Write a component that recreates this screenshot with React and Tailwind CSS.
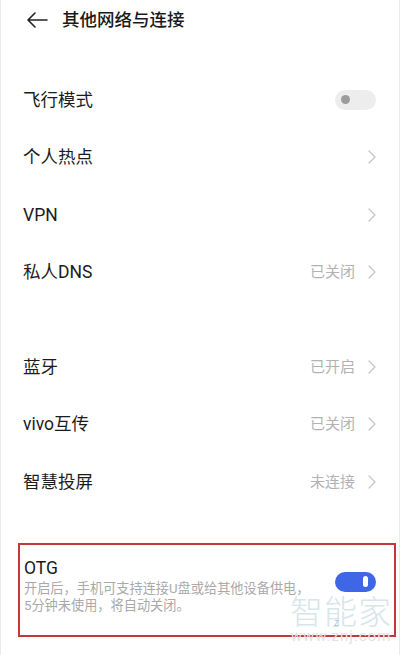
import React from "react";

const font = { fontFamily: '"Roboto", "Noto Sans CJK SC", sans-serif' };

function Chevron() {
  return (
    <svg width="8" height="14" viewBox="0 0 8 14" fill="none" className="shrink-0">
      <path d="M1 1l6 6-6 6" stroke="#c6c6c6" strokeWidth="1.3" strokeLinecap="round" strokeLinejoin="round" />
    </svg>
  );
}

function Row({ label, value, toggle }) {
  return (
    <div className="flex h-[57.5px] items-center pl-[22px] pr-[23px]">
      <span className="flex-1 text-[17.5px] text-[#1c1c1c]">{label}</span>
      {toggle ? (
        <div className="flex h-[20px] w-[41px] items-center rounded-full bg-[#ededed] pl-[6px]">
          <div className="h-[9px] w-[9px] rounded-full bg-[#9c9c9c]" />
        </div>
      ) : (
        <div className="flex items-center gap-[13px]">
          {value && <span className="text-[15px] text-[#b2b2b2]">{value}</span>}
          <Chevron />
        </div>
      )}
    </div>
  );
}

export default function App() {
  return (
    <div style={font} className="relative h-[655px] w-[400px] overflow-hidden border-x border-[#ececec] bg-white">
      <div className="flex h-10 items-center pl-[25px]">
        <svg width="22" height="16" viewBox="0 0 22 16" fill="none">
          <path d="M21 8H2M9 1L2 8l7 7" stroke="#222" strokeWidth="1.6" strokeLinecap="round" strokeLinejoin="round" />
        </svg>
        <span className="ml-[14px] text-[17.5px] font-medium text-[#1a1a1a]">其他网络与连接</span>
      </div>
      <div className="h-[31px]" />
      <Row label="飞行模式" toggle />
      <Row label="个人热点" />
      <Row label="VPN" />
      <Row label="私人DNS" value="已关闭" />
      <div className="h-[37px]" />
      <Row label="蓝牙" value="已开启" />
      <Row label="vivo互传" value="已关闭" />
      <Row label="智慧投屏" value="未连接" />
      <div className="h-[32px]" />
      <div className="ml-[17px] mr-[3px] flex h-[94px] items-start border-2 border-[#c4383a] pl-[4px] pr-[18px] pt-[12px]">
        <div className="flex-1">
          <div className="text-[17.5px] leading-[22px] text-[#1a1a1a]">OTG</div>
          <div className="mt-[1px] text-[13.2px] leading-[17px] text-[#a9a9a9]">
            开启后，手机可支持连接U盘或给其他设备供电，
            <br />
            5分钟未使用，将自动关闭。
          </div>
        </div>
        <div className="mt-[15px] flex h-[20px] w-[41px] items-center justify-end rounded-full bg-[#3f66e6] pr-[8px]">
          <div className="h-[11px] w-[5px] rounded-full bg-white" />
        </div>
      </div>
      <div className="pointer-events-none absolute left-[289px] top-[592px] flex flex-col items-center">
        <div className="relative text-[33px] leading-[36px] tracking-[1px] text-[#d6e6ea]" style={{ fontFamily: '"Noto Sans CJK SC", sans-serif', fontWeight: 300 }}>
          智能家
          <span className="absolute left-[44px] top-[12px] text-[10px] text-[#8fb5d8]">z</span>
        </div>
        <div className="text-[15px] leading-[16px] tracking-[1px] text-[#e2e2e2]">www.znj.com</div>
      </div>
    </div>
  );
}
